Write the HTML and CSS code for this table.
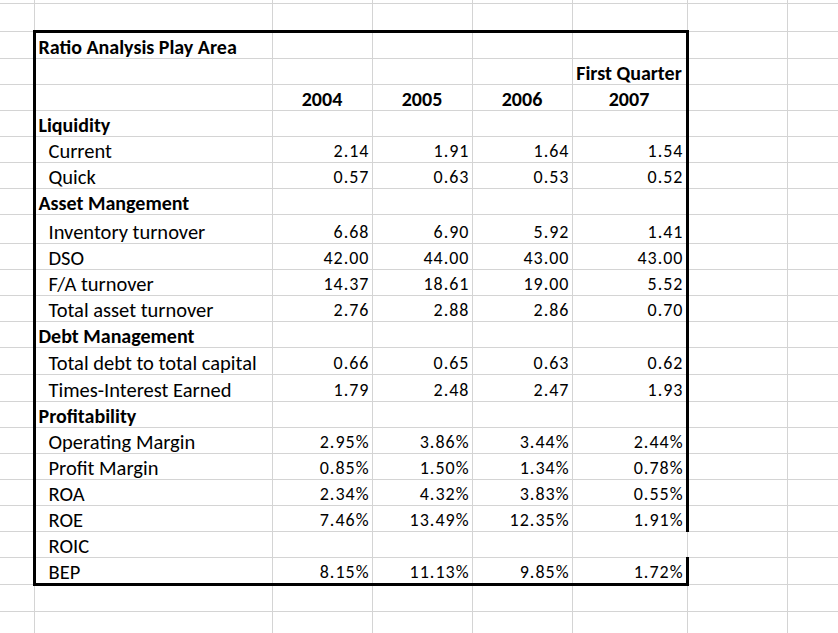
FILE: index.html
```html
<!DOCTYPE html>
<html>
<head>
<meta charset="utf-8">
<title>Ratio Analysis Play Area</title>
<link rel="stylesheet" href="styles.css">
</head>
<body>
<table class="sheet">
  <colgroup>
    <col class="ca"><col class="cb"><col class="cn"><col class="cn"><col class="cn"><col class="cf"><col class="cn"><col class="ch">
  </colgroup>
  <tbody>
    <tr class="h3"><td></td><td></td><td></td><td></td><td></td><td></td><td></td><td></td></tr>
    <tr class="h28"><td></td><td></td><td></td><td></td><td></td><td></td><td></td><td></td></tr>
    <tr class="h27"><td></td><td class="lbl t l">Ratio Analysis Play Area</td><td class="t"></td><td class="t"></td><td class="t"></td><td class="t r"></td><td></td><td></td></tr>
    <tr><td></td><td class="l"></td><td></td><td></td><td></td><td class="hd r">First Quarter</td><td></td><td></td></tr>
    <tr><td></td><td class="l"></td><td class="hd">2004</td><td class="hd">2005</td><td class="hd">2006</td><td class="hd r">2007</td><td></td><td></td></tr>
    <tr><td></td><td class="lbl l">Liquidity</td><td></td><td></td><td></td><td class="r"></td><td></td><td></td></tr>
    <tr><td></td><td class="ind l">Current</td><td class="num">2.14</td><td class="num">1.91</td><td class="num">1.64</td><td class="num r">1.54</td><td></td><td></td></tr>
    <tr><td></td><td class="ind l">Quick</td><td class="num">0.57</td><td class="num">0.63</td><td class="num">0.53</td><td class="num r">0.52</td><td></td><td></td></tr>
    <tr><td></td><td class="lbl l">Asset Mangement</td><td></td><td></td><td></td><td class="r"></td><td></td><td></td></tr>
    <tr class="h29"><td></td><td class="ind l">Inventory turnover</td><td class="num">6.68</td><td class="num">6.90</td><td class="num">5.92</td><td class="num r">1.41</td><td></td><td></td></tr>
    <tr><td></td><td class="ind l">DSO</td><td class="num">42.00</td><td class="num">44.00</td><td class="num">43.00</td><td class="num r">43.00</td><td></td><td></td></tr>
    <tr><td></td><td class="ind l">F/A turnover</td><td class="num">14.37</td><td class="num">18.61</td><td class="num">19.00</td><td class="num r">5.52</td><td></td><td></td></tr>
    <tr><td></td><td class="ind l">Total asset turnover</td><td class="num">2.76</td><td class="num">2.88</td><td class="num">2.86</td><td class="num r">0.70</td><td></td><td></td></tr>
    <tr><td></td><td class="lbl l">Debt Management</td><td></td><td></td><td></td><td class="r"></td><td></td><td></td></tr>
    <tr class="h27"><td></td><td class="ind l">Total debt to total capital</td><td class="num">0.66</td><td class="num">0.65</td><td class="num">0.63</td><td class="num r">0.62</td><td></td><td></td></tr>
    <tr class="h27"><td></td><td class="ind l">Times-Interest Earned</td><td class="num">1.79</td><td class="num">2.48</td><td class="num">2.47</td><td class="num r">1.93</td><td></td><td></td></tr>
    <tr><td></td><td class="lbl l">Profitability</td><td></td><td></td><td></td><td class="r"></td><td></td><td></td></tr>
    <tr><td></td><td class="ind l">Operating Margin</td><td class="num">2.95%</td><td class="num">3.86%</td><td class="num">3.44%</td><td class="num r">2.44%</td><td></td><td></td></tr>
    <tr><td></td><td class="ind l">Profit Margin</td><td class="num">0.85%</td><td class="num">1.50%</td><td class="num">1.34%</td><td class="num r">0.78%</td><td></td><td></td></tr>
    <tr><td></td><td class="ind l">ROA</td><td class="num">2.34%</td><td class="num">4.32%</td><td class="num">3.83%</td><td class="num r">0.55%</td><td></td><td></td></tr>
    <tr><td></td><td class="ind l">ROE</td><td class="num">7.46%</td><td class="num">13.49%</td><td class="num">12.35%</td><td class="num r">1.91%</td><td></td><td></td></tr>
    <tr><td></td><td class="ind l">ROIC</td><td></td><td></td><td></td><td></td><td></td><td></td></tr>
    <tr class="h27"><td></td><td class="ind l b">BEP</td><td class="num b">8.15%</td><td class="num b">11.13%</td><td class="num b">9.85%</td><td class="num r b">1.72%</td><td></td><td></td></tr>
    <tr class="h27"><td></td><td></td><td></td><td></td><td></td><td></td><td></td><td></td></tr>
    <tr><td></td><td></td><td></td><td></td><td></td><td></td><td></td><td></td></tr>
  </tbody>
</table>
</body>
</html>
```

FILE: styles.css
```css
html, body {
  margin: 0;
  padding: 0;
  background: #ffffff;
  overflow: hidden;
}

body {
  width: 838px;
  height: 633px;
}

.sheet {
  border-collapse: collapse;
  table-layout: fixed;
  width: 838px;
  font-family: Calibri, Carlito, Lato, "Open Sans", sans-serif;
  font-size: 20.5px;
  color: #000000;
}

.ca { width: 34px; }
.cb { width: 238px; }
.cn { width: 100px; }
.cf { width: 115px; }
.ch { width: 51px; }

.sheet tr { height: 26px; }
.sheet tr.h3 { height: 3px; }
.sheet tr.h27 { height: 27px; }
.sheet tr.h28 { height: 28px; }
.sheet tr.h29 { height: 29px; }

.sheet td {
  border: 1px solid #d4d4d4;
  padding: 0;
  line-height: 18px;
  vertical-align: bottom;
  white-space: nowrap;
  overflow: visible;
}

.sheet tr:first-child td { border-top: none; }
.sheet td:first-child { border-left: none; }

.lbl {
  font-weight: bold;
  font-size: 20px;
  padding: 0 0 2px 3px !important;
}

.ind {
  padding: 0 0 2px 13px !important;
}

.num {
  text-align: right;
  font-size: 18px;
  letter-spacing: 1px;
  padding: 0 2px 2px 0 !important;
}

.hd {
  font-weight: bold;
  font-size: 20px;
  text-align: center;
  padding: 0 0 2px 0 !important;
}

.sheet td.t { border-top: 3px solid #000000; }
.sheet td.l { border-left: 3px solid #000000; }
.sheet td.r { border-right: 3px solid #000000; }
.sheet td.b { border-bottom: 3px solid #000000; }
```
